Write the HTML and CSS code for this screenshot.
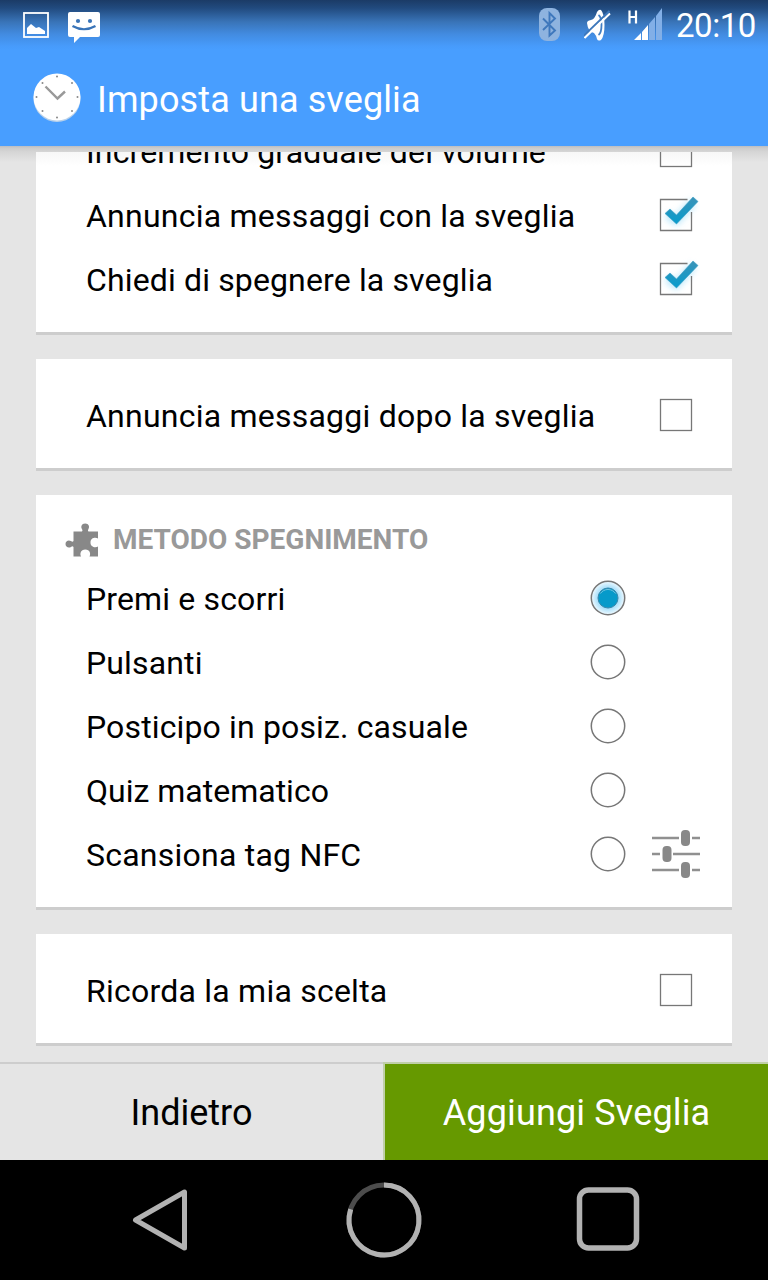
FILE: index.html
```html
<!DOCTYPE html>
<html lang="it">
<head>
<meta charset="utf-8">
<title>Imposta una sveglia</title>
<link rel="stylesheet" href="styles.css">
</head>
<body>
<svg width="0" height="0" class="defs">
  <defs>
    <filter id="glow" x="-50%" y="-50%" width="200%" height="200%"><feGaussianBlur stdDeviation="3"/></filter>
    <linearGradient id="tick" x1="0" y1="0" x2="0" y2="1"><stop offset="0" stop-color="#3a93b8"/><stop offset="1" stop-color="#069ccd"/></linearGradient>
    <radialGradient id="halo"><stop offset=".6" stop-color="#a5defa"/><stop offset="1" stop-color="#f0faff"/></radialGradient>
    <symbol id="checked" viewBox="0 0 48 48">
      <path d="M15 24l9 6L41 11" fill="none" stroke="#8fd8f8" stroke-width="8" opacity=".6" filter="url(#glow)"/>
      <path d="M35.500 8.500H8.500v31h31V21" fill="none" stroke="#777" stroke-width="1.300"/>
      <path d="M13 22.500l5-4.500 6.500 6L41 6l5 4.500L24.500 33z" fill="url(#tick)" stroke="#3c9dc2" stroke-width=".6"/>
    </symbol>
    <symbol id="unchecked" viewBox="0 0 48 48"><rect x="8.500" y="8.500" width="31" height="31" fill="none" stroke="#777" stroke-width="1.300"/></symbol>
    <symbol id="radio" viewBox="0 0 48 48"><circle cx="24" cy="24" r="16.700" fill="none" stroke="#777" stroke-width="1.500"/></symbol>
    <symbol id="radio-on" viewBox="0 0 48 48"><circle cx="24" cy="24" r="16.700" fill="url(#halo)" stroke="#777" stroke-width="1.500"/><circle cx="24" cy="24" r="10" fill="#069aca" stroke="#3c88aa"/><path d="M16.500 19.500a9 9 0 0 1 15 0" fill="none" stroke="#6fc3e0" stroke-width="1"/></symbol>
  </defs>
</svg>
<div class="screen">
  <header class="top">
    <div class="status">
      <svg class="s-pic" width="26" height="26" viewBox="0 0 26 26"><rect x="1" y="1" width="24" height="24" fill="none" stroke="#fff" stroke-width="1.800"/><path d="M4 22v-6l4-4 5 4 3-1 6 4v3z" fill="#fff"/></svg>
      <svg class="s-msg" width="32" height="31" viewBox="0 0 32 31"><path d="M2 0h28q2 0 2 2v21q0 2-2 2H12l-6 6v-6H2q-2 0-2-2V2q0-2 2-2z" fill="#fff"/><circle cx="10" cy="9" r="2.100" fill="#3974b8"/><circle cx="22" cy="9" r="2.100" fill="#3974b8"/><path d="M4.500 14q11.500 6.500 23 0" fill="none" stroke="#3974b8" stroke-width="2.200"/></svg>
      <svg class="s-bt" width="21" height="33" viewBox="0 0 21 33"><rect width="21" height="33" rx="8" fill="#8eb3df"/><path d="M4 10.500l12 12-5.500 5V5l5.500 5.500L4 22" fill="none" stroke="#3f78bc" stroke-width="1.900"/></svg>
      <svg class="s-mute" width="27" height="32" viewBox="0 0 27 32"><path d="M3 14q0-2.500 4-3 4-1 6-8 2-3 4-2 3.500 4 3.500 15T17 31q-3 1.500-4-1-1-4-3-6-6-1-7-10z" fill="#fff"/><path d="M14.500 6q3 2 3 10t-3 10" fill="none" stroke="#437fc4" stroke-width="1.800"/><path d="M-.5 27L25.500 2" stroke="#3e78bb" stroke-width="2"/><path d="M.5 29L26 4.500" stroke="#fff" stroke-width="2"/></svg>
      <svg class="s-net" width="34" height="33" viewBox="0 0 34 33"><path d="M1.500 2.500v13M8 2.500v13M1.500 9h7" stroke="#fff" stroke-width="2.200" fill="none"/><path d="M6 32l7-7v7zM14 24l6-7v15h-6z" fill="#fff"/><path d="M21 16l6-7v23h-6zM28 8l6-8v32h-6z" fill="#82afe7"/></svg>
      <span class="clock">20:10</span>
    </div>
    <div class="title">
      <svg width="48" height="50" viewBox="0 0 48 50"><circle cx="24" cy="25.500" r="23.500" fill="#b9d1ea"/><circle cx="24" cy="24" r="23.500" fill="#fff"/><path d="M12.500 13.500l12 12 7.500-7" fill="none" stroke="#999" stroke-width="2.400"/><g fill="#888"><circle cx="24" cy="3.500" r="1"/><circle cx="24" cy="44.500" r="1"/><circle cx="3.500" cy="24" r="1"/><circle cx="44.500" cy="24" r="1"/><circle cx="9.500" cy="10" r="1"/><circle cx="39" cy="10" r="1"/><circle cx="9.500" cy="38" r="1"/><circle cx="39" cy="38" r="1"/></g></svg>
      <h1>Imposta una sveglia</h1>
    </div>
  </header>
  <main class="content">
    <section class="card first">
      <div class="row cut"><span class="snug">Incremento graduale del volume</span><svg class="ctl"><use href="#unchecked"/></svg></div>
      <div class="row"><span class="wide">Annuncia messaggi con la sveglia</span><svg class="ctl"><use href="#checked"/></svg></div>
      <div class="row"><span class="snug">Chiedi di spegnere la sveglia</span><svg class="ctl"><use href="#checked"/></svg></div>
    </section>
    <section class="card single">
      <div class="row"><span class="wide">Annuncia messaggi dopo la sveglia</span><svg class="ctl"><use href="#unchecked"/></svg></div>
    </section>
    <section class="card">
      <div class="heading">
        <svg width="34" height="34" viewBox="0 0 34 34"><path d="M8.500 8.500h8.500q1-1 0-2.500c-1.500-2-.5-5.500 3.200-5.500s4.700 3.500 3.200 5.500q-1 1.500 0 2.500H33v7c-2.500-1.500-7.500-.8-7.500 4s5 5.500 7.500 4v10h-8.500c1.500-2.500.5-7-4.200-7s-5.700 4.500-4.200 7H8.500V24q-1-1.500-2.500 0C3.500 25.500.5 24 .5 21s3-4.500 5.500-3q1.500 1.500 2.500 0z" fill="#888"/></svg>
        <h2>METODO SPEGNIMENTO</h2>
      </div>
      <div class="row radio"><span class="snug">Premi e scorri</span><svg class="ctl"><use href="#radio-on"/></svg></div>
      <div class="row radio"><span class="snug">Pulsanti</span><svg class="ctl"><use href="#radio"/></svg></div>
      <div class="row radio"><span class="snug">Posticipo in posiz. casuale</span><svg class="ctl"><use href="#radio"/></svg></div>
      <div class="row radio"><span>Quiz matematico</span><svg class="ctl"><use href="#radio"/></svg></div>
      <div class="row nfc"><span class="wide">Scansiona tag NFC</span><svg class="ctl"><use href="#radio"/></svg>
        <svg class="tune" width="48" height="48" viewBox="0 0 48 48"><path d="M0 8h27M40 8h8M0 24h8M21 24h27M0 40h27M40 40h8" stroke="#909090" stroke-width="2.400"/><g fill="#888"><rect x="29" y="0" width="9" height="16" rx="4"/><rect x="10.500" y="16" width="9" height="16" rx="4"/><rect x="29" y="32" width="9" height="16" rx="4"/></g></svg>
      </div>
    </section>
    <section class="card single">
      <div class="row"><span class="wide">Ricorda la mia scelta</span><svg class="ctl"><use href="#unchecked"/></svg></div>
    </section>
  </main>
  <footer class="actions">
    <div class="back">Indietro</div>
    <div class="add">Aggiungi Sveglia</div>
  </footer>
  <nav class="nav">
    <svg width="120" height="120" viewBox="0 0 120 120"><path d="M35.500 60L84.500 32V88z" fill="none" stroke="#b2b2b2" stroke-width="5" stroke-linejoin="round"/></svg>
    <svg width="120" height="120" viewBox="0 0 120 120"><circle cx="60" cy="60" r="35" fill="none" stroke="#4c4c4c" stroke-width="5"/><path d="M60 25a35 35 0 1 1-33.300 24.200" fill="none" stroke="#b2b2b2" stroke-width="5"/></svg>
    <svg width="120" height="120" viewBox="0 0 120 120"><rect x="31.500" y="30" width="57" height="58" rx="9" fill="none" stroke="#b2b2b2" stroke-width="5.500"/></svg>
  </nav>
</div>
</body>
</html>
```
FILE: styles.css
```css
* { box-sizing: border-box; }
body { margin: 0; font-family: Roboto, sans-serif; color: #000; }
svg { display: block; flex: none; }
.defs { position: absolute; }
.screen { width: 768px; height: 1280px; display: flex; flex-direction: column; overflow: hidden; background: #e5e5e5; }
.top { height: 146px; flex: none; background: linear-gradient(#1b3b66 0, #214a7e 8px, #3974b8 22px, #428be0 34px, #479bfb 46px, #489eff 50px); color: #fff; }
.status { height: 50px; display: flex; align-items: flex-start; padding-left: 23px; }
.s-pic { margin-top: 12px; }
.s-msg { margin: 12px 0 0 19px; }
.s-bt { margin: 8px 0 0 439px; }
.s-mute { margin: 9px 0 0 24px; }
.s-net { margin: 8px 0 0 17px; }
.clock { font-size: 33px; line-height: 52px; letter-spacing: -.45px; margin-left: 14px; white-space: nowrap; }
.title { height: 96px; display: flex; align-items: center; padding-left: 33px; gap: 16px; }
h1 { margin: 3px 0 0; font-size: 36px; font-weight: 400; line-height: 42px; letter-spacing: .12px; white-space: nowrap; }
.content { flex: 1; min-height: 0; display: flex; flex-direction: column; gap: 24px; padding: 6px 36px 0; background: linear-gradient(#b9bdc3 0, #cbcbcb 2px, #d6d6d6 6px, #e5e5e5 16px); }
.card { flex: none; background: #fff; border-bottom: 3px solid #cdcdcd; padding-bottom: 21px; overflow: hidden; }
.first { background: linear-gradient(#f7f7f7, #fff 14px); }
.single { padding-top: 24px; }
.row { height: 64px; display: flex; align-items: center; justify-content: space-between; padding: 0 32px 0 50px; font-size: 32px; line-height: 40px; white-space: nowrap; }
.row span { padding-top: 2px; }
.snug { letter-spacing: .14px; }
.wide { letter-spacing: .23px; }
.cut { margin-top: -33px; }
.ctl { width: 48px; height: 48px; }
.radio { padding-right: 100px; }
.nfc .ctl { margin-left: auto; margin-right: 20px; }
.heading { height: 71px; display: flex; gap: 14px; padding: 28px 0 0 29px; }
h2 { margin: 0; font-size: 28px; line-height: 34px; font-weight: 700; color: #999; white-space: nowrap; }
.actions { height: 98px; flex: none; display: grid; grid-template-columns: 383px 385px; font-size: 36px; line-height: 42px; }
.back, .add { display: flex; align-items: center; justify-content: center; padding-top: 2px; border-top: 2px solid #cdcdcd; }
.add { background: #690; color: #fff; border-top-color: #c0cfa8; border-left: 2px solid #c0cfa8; letter-spacing: .15px; }
.nav { height: 120px; flex: none; background: #000; display: flex; justify-content: space-between; padding: 0 100px; }
```
